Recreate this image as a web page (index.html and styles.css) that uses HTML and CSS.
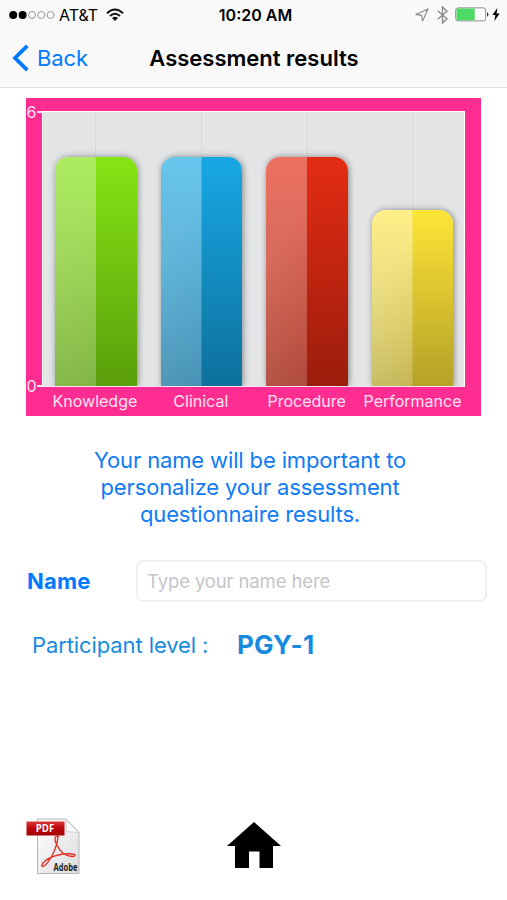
FILE: index.html
```html
<!DOCTYPE html>
<html lang="en">
<head>
<meta charset="utf-8">
<title>Assessment results</title>
<link rel="stylesheet" href="styles.css">
</head>
<body>
<header class="top">
  <div class="status">
    <div class="carrier">
      <svg width="46" height="10" viewBox="0 0 46 10"><g fill="#000"><circle cx="4.2" cy="5" r="4"/><circle cx="13.6" cy="5" r="4"/></g><g fill="none" stroke="#999" stroke-width="1"><circle cx="23" cy="5" r="3.5"/><circle cx="32.3" cy="5" r="3.5"/><circle cx="41.6" cy="5" r="3.5"/></g></svg>
      <span class="network">AT&amp;T</span>
      <svg class="wifi" width="18" height="13" viewBox="0 0 18 13"><g fill="none" stroke="#111" stroke-width="2"><path d="M1 5.2Q9-2.3 17 5.2"/><path d="M4 8.1Q9 3.4 14 8.1"/></g><path d="M6 10Q9 7.5 12 10L9 13Z" fill="#111"/></svg>
    </div>
    <span class="time">10:20 AM</span>
    <div class="indicators">
      <svg width="14" height="14" viewBox="0 0 14 14"><path d="M13 1L1 6.4 6.4 7.4 7.6 13Z" fill="none" stroke="#888" stroke-width="1.1" stroke-linejoin="round"/></svg>
      <svg class="bluetooth" width="11" height="18" viewBox="0 0 11 18"><path d="M.6 4.7L10 12.8 5.5 17V1L10 5.2.6 13.3" fill="none" stroke="#888" stroke-width="1.3"/></svg>
      <svg class="battery" width="34" height="15" viewBox="0 0 34 15"><rect x=".7" y=".9" width="30" height="13" rx="2.2" fill="#fff" stroke="#8b8b8b" stroke-width="1"/><path d="M1.5 1.500h18.200v11.800H1.500z" fill="#4cd964"/><path d="M32 5q3 2.4 0 4.8z" fill="#333"/></svg>
      <svg class="bolt" width="8" height="13" viewBox="0 0 8 13"><path d="M5.4 0L.4 7h3L2.3 13 7.7 5.6H4.6Z" fill="#000"/></svg>
    </div>
  </div>
  <nav class="nav">
    <a class="back"><svg width="17" height="28" viewBox="0 0 17 28"><path d="M15.3 1.8L3 14l12.3 12.2" fill="none" stroke="#007aff" stroke-width="3.8"/></svg><span>Back</span></a>
    <h1 class="title">Assessment results</h1>
  </nav>
</header>
<main class="content">
  <section class="chart">
    <div class="axis"><span>6</span><span>0</span></div>
    <div class="plot">
      <div class="slot"><div class="bar green"></div></div>
      <div class="slot"><div class="bar blue"></div></div>
      <div class="slot"><div class="bar red"></div></div>
      <div class="slot"><div class="bar yellow"></div></div>
    </div>
    <div class="labels"><span>Knowledge</span><span>Clinical</span><span>Procedure</span><span>Performance</span></div>
  </section>
  <p class="hint">Your name will be important to<br>personalize your assessment<br>questionnaire results.</p>
  <div class="name-row"><label class="name-label" for="name">Name</label><input class="name-input" id="name" type="text" placeholder="Type your name here"></div>
  <div class="level-row"><span class="level-label">Participant level :</span><strong class="level">PGY-1</strong></div>
</main>
<footer class="tools">
  <svg class="pdf" width="54" height="57" viewBox="0 0 54 57">
    <defs>
      <linearGradient id="page" x1="0" y1="0" x2="1" y2="1"><stop offset="0" stop-color="#fff"/><stop offset="1" stop-color="#dcdcdc"/></linearGradient>
      <linearGradient id="tag" x1="0" y1="0" x2="0" y2="1"><stop offset="0" stop-color="#dc3a3a"/><stop offset=".4" stop-color="#c00a0d"/><stop offset="1" stop-color="#a50003"/></linearGradient>
    </defs>
    <path d="M11.5 1h28.5L53 14.5V55.5H11.5Z" fill="url(#page)" stroke="#b5b5b5"/>
    <path d="M40 1.5L40.5 13.5 52.5 14.5Z" fill="#fafafa" stroke="#c4c4c4" stroke-width=".7"/>
    <path d="M33 18.500C28 17 28 22 31 27C34 34 39 38 46 38.500C50 38.500 50 36 46 36C37 35 25 38 19 43C15 46 15 50 18 48C24 44 31 30 32 18.500" fill="none" stroke="#e2302a" stroke-width="1.400"/>
    <path d="M.5 3.500h38v14H.5z" fill="url(#tag)"/>
    <text class="pdf-tag" x="9.700" y="14.300" textLength="18.500" lengthAdjust="spacingAndGlyphs">PDF</text>
    <text class="pdf-brand" x="27.500" y="52.700" textLength="24" lengthAdjust="spacingAndGlyphs">Adobe</text>
  </svg>
  <svg class="home" width="54" height="46" viewBox="0 0 54 46"><path d="M27 0L54 24H46V46H32.500V29.500H22V46H8V24H0Z"/></svg>
</footer>
</body>
</html>
```
FILE: styles.css
```css
* { box-sizing: border-box; }
body {
  margin: 0;
  width: 507px;
  height: 900px;
  display: flex;
  flex-direction: column;
  overflow: hidden;
  background: #fff;
  font-family: Inter, "Liberation Sans", sans-serif;
}
svg { display: block; flex: none; overflow: visible; }
.top { height: 88px; background: #f9f9f9; border-bottom: 1px solid #dedee0; }
.status {
  height: 29px;
  display: grid;
  grid-template-columns: 1fr 76px 1fr;
  align-items: center;
  padding: 0 7px 0 9px;
  font-size: 16px;
  line-height: 20px;
}
.carrier { display: flex; align-items: center; }
.network { margin-left: 4px; width: 41px; letter-spacing: 0; white-space: nowrap; }
.wifi { margin-left: 6px; }
.time { font-weight: 600; font-size: 16px; white-space: nowrap; text-align: center; padding: 1px 0 0 2px; }
.indicators { display: flex; align-items: center; justify-content: flex-end; }
.bluetooth { margin-left: 8px; }
.battery { margin-left: 7px; }
.bolt { margin-left: 3px; }
.nav { height: 58px; display: grid; grid-template-columns: 137px 1fr 136px; align-items: center; }
.back { display: flex; align-items: center; gap: 8px; padding-left: 12px; color: #007aff; font-size: 22px; letter-spacing: -0.1px; }
.title { margin: 0; text-align: center; font-size: 22px; font-weight: 600; white-space: nowrap; }
.content { flex: 1; }
.chart {
  width: 455px;
  height: 318px;
  margin: 10px 0 0 26.4px;
  padding-top: 13px;
  display: grid;
  grid-template-columns: 15.6px 423.5px;
  grid-template-rows: 276px 29px;
  background: #ff2d92;
  color: #ffe3f1;
}
.axis {
  display: flex;
  flex-direction: column;
  justify-content: space-between;
  font-size: 16px;
  line-height: 20px;
  margin: -9px 0;
}
.axis span { display: flex; align-items: center; }
.axis span::after { content: ""; flex: 1; height: 1.5px; background: #ffe3f1; margin-left: 1px; }
.plot { display: flex; background: #e2e4e6; border: 1.5px solid #fff; border-bottom-color: #ffe3f1; }
.slot {
  flex: 0 0 105.65px;
  display: flex;
  align-items: flex-end;
  justify-content: center;
  background: linear-gradient(#d5dadb, #d5dadb) center / 1px 100% no-repeat;
}
.slot:last-child { flex-basis: 105px; }
.bar {
  width: 81.5px;
  height: 229px;
  border-radius: 14px 14px 0 0;
  box-shadow: 1px 0 6px rgba(0, 0, 0, 0.42);
  clip-path: inset(-8px -8px 0 -8px);
}
.green { background: linear-gradient(120deg, rgba(255,255,255,.32), rgba(255,255,255,.32) 35%, rgba(255,255,255,.24)) 0 0 / 50% 100% no-repeat, linear-gradient(#85e414, #5a9e0b); }
.blue { background: linear-gradient(120deg, rgba(255,255,255,.34), rgba(255,255,255,.34) 35%, rgba(255,255,255,.24)) 0 0 / 50% 100% no-repeat, linear-gradient(#18a8e4, #0d709d); }
.red { background: linear-gradient(120deg, rgba(255,255,255,.32), rgba(255,255,255,.32) 35%, rgba(255,255,255,.2)) 0 0 / 50% 100% no-repeat, linear-gradient(#e42c14, #9b1d0c); }
.yellow { height: 176px; background: linear-gradient(120deg, rgba(255,255,255,.4), rgba(255,255,255,.4) 35%, rgba(255,255,255,.22)) 0 0 / 50% 100% no-repeat, linear-gradient(#ffe537, #b4a127); }
.labels {
  grid-column: 2;
  display: grid;
  grid-template-columns: repeat(4, 1fr);
  justify-items: center;
  align-items: center;
  font-size: 16px;
  line-height: 29px;
  white-space: nowrap;
}
.hint { margin: 31px 7px 0 0; text-align: center; color: #0f7bf5; font-size: 22px; line-height: 27px; letter-spacing: -0.14px; }
.name-row { display: flex; align-items: center; margin: 32px 20px 0 27px; height: 42px; }
.name-label { width: 109px; color: #007aff; font-size: 22px; font-weight: 700; letter-spacing: 0.2px; }
.name-input {
  flex: 1;
  min-width: 0;
  height: 42px;
  padding: 0 10px 1px 9px;
  border: 2px solid #f0f0f0;
  border-radius: 7px;
  background: #fff;
  font: 18.500px Inter, sans-serif;
  letter-spacing: -0.12px;
}
.name-input::placeholder { color: #c5c5c9; opacity: 1; }
.level-row { display: flex; align-items: center; margin: 25px 0 0 32px; height: 36px; color: #168be0; }
.level-label { width: 205px; font-size: 22px; letter-spacing: -0.1px; white-space: nowrap; }
.level { font-size: 26px; font-weight: 700; letter-spacing: 0.2px; margin-top: -1px; }
.tools { height: 82px; display: grid; grid-template-columns: 201px 54px; padding-left: 26px; align-items: start; }
.home { margin-top: 4px; }
.pdf-tag { fill: #fff; font: 700 10.500px "Open Sans", sans-serif; }
.pdf-brand { fill: #222; font: 700 11px "Open Sans", sans-serif; }
```
